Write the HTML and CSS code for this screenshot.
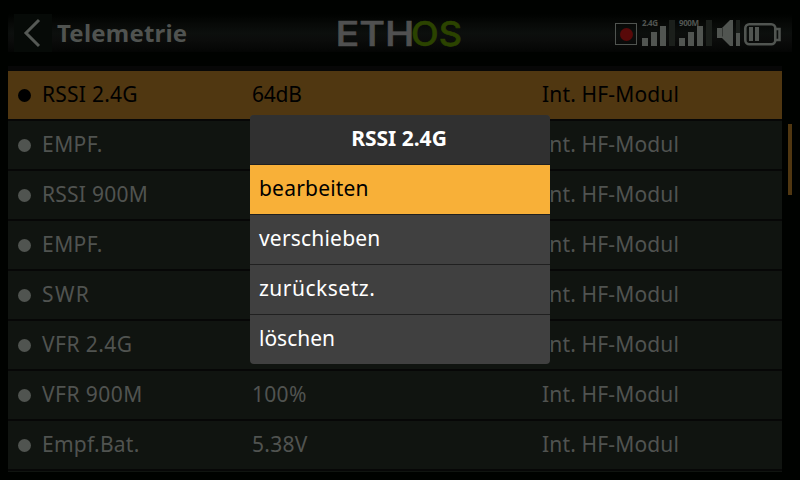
FILE: index.html
```html
<!DOCTYPE html>
<html lang="de">
<head>
<meta charset="utf-8">
<title>Telemetrie</title>
<link rel="stylesheet" href="styles.css">
</head>
<body>
<header class="topbar">
  <div class="back"><svg width="38" height="38" viewBox="0 0 38 38"><path d="M25 6 12 19 25 32" fill="none" stroke="#555955" stroke-width="3"/></svg></div>
  <h1>Telemetrie</h1>
  <svg class="logo" width="130" height="50" viewBox="334 8 130 50">
    <g font-family="Inter" font-size="34.5" font-weight="500" stroke-width="0.6">
      <text x="335.500" y="46" textLength="79" lengthAdjust="spacingAndGlyphs" fill="#505050" stroke="#505050">ETH</text>
      <text x="411" y="46" textLength="51" lengthAdjust="spacingAndGlyphs" fill="#2b4300" stroke="#2b4300">OS</text>
    </g>
  </svg>
  <svg class="status" width="172" height="38" viewBox="612 14 172 38">
    <rect x="615.5" y="23.5" width="21" height="21" fill="none" stroke="#505450"/>
    <circle cx="626.5" cy="34.5" r="6.5" fill="#580909"/>
    <g fill="#515551">
      <path d="M642 38h6v8h-6zM651 32h6v14h-6zM660 26h6v20h-6zM679 38h6v8h-6zM688 32h6v14h-6zM697 26h6v20h-6zM736 33h4v13h-4z"/>
      <path d="M717 28h5l8-8h3v26h-3l-8-8h-5z"/>
      <path d="M749 27h4v14h-4zM755 27h4v14h-4z"/>
    </g>
    <path d="M669 20h6v26h-6zM706 20h6v26h-6zM736 20h4v13h-4z" fill="#1b1f1b"/>
    <path d="M722.5 27.5v9" stroke="#343734"/>
    <rect x="745.3" y="24.3" width="30" height="20" rx="4" fill="none" stroke="#515551" stroke-width="2.6"/>
    <path d="M775 29h4.500v11H775" fill="none" stroke="#515551" stroke-width="2.5"/>
    <g font-family="Noto Sans" font-size="8" font-weight="700" fill="#515551">
      <text x="642" y="26" textLength="16">2.4G</text>
      <text x="679" y="26" textLength="20">900M</text>
    </g>
  </svg>
</header>
<div class="content">
<main class="list">
  <div class="row selected"><i></i><span class="n">RSSI 2.4G</span><span class="v tight">64dB</span><span>Int. HF-Modul</span></div>
  <div class="row"><i></i><span class="n wide">EMPF.</span><span class="v"></span><span>Int. HF-Modul</span></div>
  <div class="row"><i></i><span class="n">RSSI 900M</span><span class="v"></span><span>Int. HF-Modul</span></div>
  <div class="row"><i></i><span class="n wide">EMPF.</span><span class="v"></span><span>Int. HF-Modul</span></div>
  <div class="row"><i></i><span class="n wider">SWR</span><span class="v"></span><span>Int. HF-Modul</span></div>
  <div class="row"><i></i><span class="n wide">VFR 2.4G</span><span class="v"></span><span>Int. HF-Modul</span></div>
  <div class="row"><i></i><span class="n wide">VFR 900M</span><span class="v">100%</span><span>Int. HF-Modul</span></div>
  <div class="row"><i></i><span class="n">Empf.Bat.</span><span class="v">5.38V</span><span>Int. HF-Modul</span></div>
  <div class="next"></div>
</main>
<div class="scroll"></div>
</div>
<div class="menu">
  <h2>RSSI 2.4G</h2>
  <div class="item active">bearbeiten</div>
  <div class="item">verschieben</div>
  <div class="item loose">zurücksetz.</div>
  <div class="item short">löschen</div>
</div>
</body>
</html>
```
FILE: styles.css
```css
* { box-sizing: border-box; }
body {
  margin: 0;
  width: 800px;
  height: 480px;
  overflow: hidden;
  background: #000200;
  color: #505350;
  font: 21px/46px "Noto Sans", sans-serif;
}
.topbar {
  display: flex;
  align-items: center;
  height: 38px;
  margin: 14px 8px;
  padding-left: 6px;
  background: linear-gradient(#000200, #080a08 30%, #0c0f0d 50%, #0b0c0b 70%, #040504);
}
.topbar > * { flex: none; }
.back { width: 38px; height: 38px; background: #060a07; }
.back svg { display: block; }
h1 {
  width: 282px;
  margin: 0;
  padding-left: 5px;
  font-size: 24px;
  font-weight: 700;
  line-height: 38px;
  letter-spacing: 0.2px;
}
.status { margin-left: 148px; }
.content { display: flex; }
.list { width: 774px; margin-left: 8px; border-top: 5px solid #070707; }
.row {
  display: flex;
  height: 50px;
  padding-left: 10px;
  background: #101410;
  border-bottom: 2px solid #070707;
  letter-spacing: 0.15px;
}
.row i {
  width: 13px;
  height: 13px;
  margin-top: 18px;
  border-radius: 50%;
  background: #505450;
}
.n { width: 210px; margin-left: 11px; letter-spacing: 0.25px; }
.wide { letter-spacing: 0.45px; }
.wider { letter-spacing: 1.4px; }
.v { width: 290px; letter-spacing: 0.3px; }
.tight { letter-spacing: -0.2px; }
.selected { background: #503711; color: #000; }
.selected i { background: #000; }
.next { height: 1px; background: #101410; }
.scroll { width: 4px; height: 71px; margin: 58px 0 0 6px; background: #503711; }
.menu {
  position: absolute;
  left: 250px;
  top: 115px;
  width: 300px;
  height: 249px;
  overflow: hidden;
  border-radius: 4px;
  background: #404040;
  color: #fff;
}
h2 {
  height: 50px;
  margin: 0;
  padding-right: 2px;
  background: #303030;
  border-bottom: 1px solid #202020;
  text-align: center;
  font-size: 21px;
  font-weight: 700;
  line-height: 47px;
}
.item {
  height: 50px;
  padding-left: 9px;
  border-bottom: 1px solid #202020;
  line-height: 47px;
  letter-spacing: 0.2px;
}
.loose { letter-spacing: 0.5px; }
.short { letter-spacing: 0; }
.item:last-child { border: 0; }
.active { background: #f8b038; color: #000; }
```
